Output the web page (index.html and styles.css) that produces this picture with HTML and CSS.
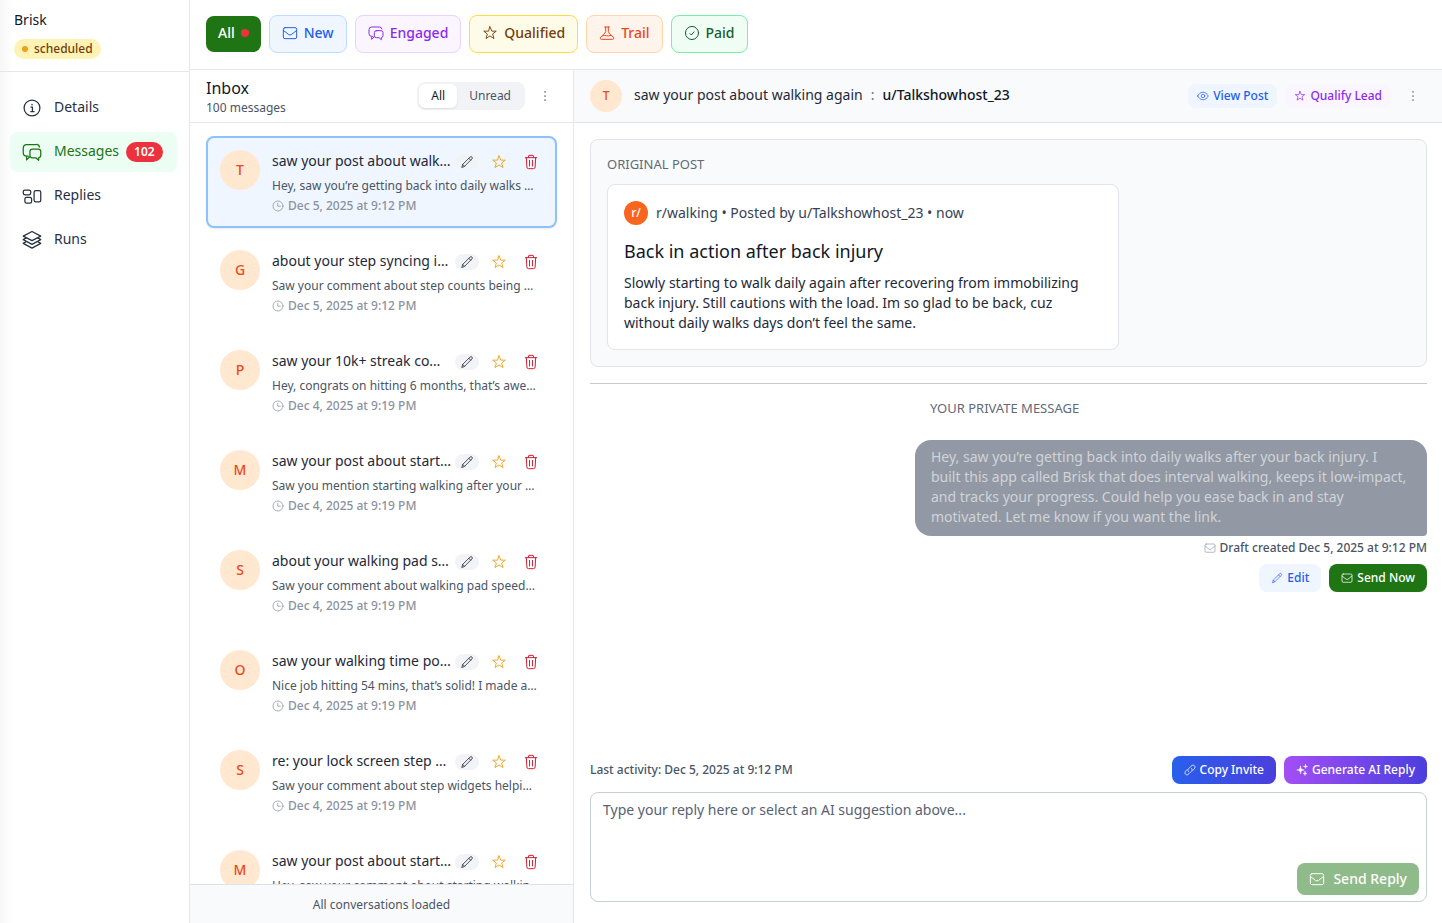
FILE: index.html
```html
<!DOCTYPE html>
<html lang="en">
<head>
<meta charset="utf-8">
<meta name="viewport" content="width=device-width, initial-scale=1">
<title>Brisk – Messages</title>
<link rel="stylesheet" href="styles.css">
</head>
<body>
<svg class="sprite" aria-hidden="true">
  <symbol id="i-info" viewBox="0 0 24 24"><circle cx="12" cy="12" r="9.500"/><path d="M10.800 10.800h1.700v5.400M10.500 16.300h4M12 7.500v.8"/></symbol>
  <symbol id="i-chat" viewBox="0 0 24 24"><path d="M5.500 18v3.500l3.500-3.500M7.500 17H5.500a4 4 0 0 1-4-4V7a4 4 0 0 1 4-4h11.500a4 4 0 0 1 4 3"/><path d="M12.500 8.500h7a3 3 0 0 1 3 3v4.500a3 3 0 0 1-2.500 3v3l-3.500-3h-4a3 3 0 0 1-3-3v-4.500a3 3 0 0 1 3-3z"/></symbol>
  <symbol id="i-replies" viewBox="0 0 24 24"><rect x="1.500" y="5" width="9" height="5.500" rx="2"/><rect x="3.500" y="13.500" width="8" height="7" rx="2"/><rect x="14.500" y="5.500" width="8" height="13.500" rx="2"/></symbol>
  <symbol id="i-layers" viewBox="0 0 24 24"><path d="M12 1.800 1.500 7.300 12 12.800l10.500-5.500zM5 9.500l-3.500 2L12 17.200l10.500-5.700-3.500-2M5 14l-3.500 2L12 21.800 22.500 16 19 14"/></symbol>
  <symbol id="i-mail" viewBox="0 0 24 24"><rect x="2" y="4" width="20" height="16.500" rx="2.500"/><path d="m2 8 8 6.300a3.200 3.200 0 0 0 4 0L22 8"/></symbol>
  <symbol id="i-star" viewBox="-1 -1 26 26"><path d="m12 2 2.900 7h7.300l-5.900 4.600 2.200 7.400L12 16.800 5.500 21l2.200-7.400L1.800 9h7.300z"/></symbol>
  <symbol id="i-flask" viewBox="0 0 24 24"><path d="M8.500 3h7M10 3v7L8 13.500l-5.500 4.700c-1.500 1.800-.5 3.300 1.500 3.300h16c2 0 3-1.500 1.500-3.300L16 13.500 14 10V3M5.500 16.200c4-2 6.500 2 12.500-.7"/></symbol>
  <symbol id="i-check" viewBox="0 0 24 24"><circle cx="12" cy="12" r="9.800"/><path d="m9 13 2 2 4-4.700"/></symbol>
  <symbol id="i-pencil" viewBox="-1 -1 26 26"><path d="M2.500 21.500 4 16.500 17.800 2.800a2.300 2.300 0 0 1 3.400 3.400L7.500 20zM15.500 5.200l3.300 3.300M4 16.500 7.500 20"/></symbol>
  <symbol id="i-trash" viewBox="0 0 24 24"><path d="M3.500 5.500h17M8 5.300l.8-3.300h6.400l.8 3.300M5 5.500l.8 14a2.500 2.500 0 0 0 2.500 2.500h7.400a2.500 2.500 0 0 0 2.500-2.500l.8-14M9.800 9.500v8.500M14.200 9.500v8.500"/></symbol>
  <symbol id="i-clock" viewBox="0 0 24 24"><circle cx="12" cy="12" r="10"/><path d="M11.500 6.500v6h5"/></symbol>
  <symbol id="i-eye" viewBox="0 0 24 24"><path d="M1.500 12C4 7 7.500 4.500 12 4.500S20 7 22.500 12C20 17 16.500 19.500 12 19.500S4 17 1.500 12z"/><circle cx="12" cy="12" r="3.500"/></symbol>
  <symbol id="i-link" viewBox="0 0 24 24"><path d="M9.500 15.500c-2.500-1.500-2.500-4 0-6.500l4.500-4.500c3-3 5.500-2.500 7-1s1.800 4-1 7l-2.500 2.500"/><path d="M14.500 8.500c2.500 1.500 2.500 4 0 6.500L10 19.500c-3 3-5.500 2.500-7 1s-1.800-4 1-7L6.500 11"/></symbol>
  <symbol id="i-sparkle" viewBox="0 0 24 24"><path fill="currentColor" stroke="currentColor" stroke-width="1" d="M9 4.500c.8 5.500 2 6.700 7.500 7.500-5.500.8-6.700 2-7.500 7.500-.8-5.500-2-6.700-7.500-7.500 5.500-.8 6.700-2 7.500-7.500zM19 1c.4 2.900 1.100 3.600 4 4-2.900.4-3.600 1.100-4 4-.4-2.900-1.100-3.600-4-4 2.900-.4 3.600-1.100 4-4zM18 15c.4 2.900 1.100 3.600 4 4-2.900.4-3.600 1.100-4 4-.4-2.900-1.100-3.600-4-4 2.900-.4 3.600-1.100 4-4z"/></symbol>
  <symbol id="i-more" viewBox="0 0 24 24"><path fill="currentColor" stroke="none" d="M10.500 3.500h3v3h-3zM10.500 10.500h3v3h-3zM10.500 17.500h3v3h-3z"/></symbol>
</svg>
<div class="app">
  <aside class="sidebar">
    <div class="brand">
      <div class="brand-name">Brisk</div>
      <span class="status"><i class="status-dot"></i>scheduled</span>
    </div>
    <nav class="nav">
      <a class="nav-link" href="#details"><svg class="icon-l"><use href="#i-info"/></svg><span>Details</span></a>
      <a class="nav-link nav-active" href="#messages"><svg class="icon-l"><use href="#i-chat"/></svg><span>Messages</span><b class="count">102</b></a>
      <a class="nav-link" href="#replies"><svg class="icon-l"><use href="#i-replies"/></svg><span>Replies</span></a>
      <a class="nav-link" href="#runs"><svg class="icon-l"><use href="#i-layers"/></svg><span>Runs</span></a>
    </nav>
  </aside>
  <div class="workspace">
    <div class="filters">
      <button class="filter filter-all">All<i class="dot"></i></button>
      <button class="filter filter-new"><svg class="icon-m"><use href="#i-mail"/></svg>New</button>
      <button class="filter filter-engaged"><svg class="icon-m"><use href="#i-chat"/></svg>Engaged</button>
      <button class="filter filter-qualified"><svg class="icon-m"><use href="#i-star"/></svg>Qualified</button>
      <button class="filter filter-trail"><svg class="icon-m"><use href="#i-flask"/></svg>Trail</button>
      <button class="filter filter-paid"><svg class="icon-m"><use href="#i-check"/></svg>Paid</button>
    </div>
    <div class="panes">
      <section class="inbox">
        <header class="inbox-head">
          <div class="inbox-title"><h1>Inbox</h1><p>100 messages</p></div>
          <div class="segmented"><button class="segment segment-on">All</button><button class="segment">Unread</button></div>
          <button class="more" aria-label="Inbox menu"><svg class="icon-s"><use href="#i-more"/></svg></button>
        </header>
        <div class="threads" id="threads"></div>
        <footer class="inbox-foot">All conversations loaded</footer>
      </section>
      <main class="detail">
        <header class="detail-head">
          <span class="avatar avatar-small">T</span>
          <div class="subject"><span>saw your post about walking again</span><span class="colon">:</span><strong>u/Talkshowhost_23</strong></div>
          <div class="detail-actions">
            <button class="chip chip-blue"><svg class="icon-xs"><use href="#i-eye"/></svg>View Post</button>
            <button class="chip chip-purple"><svg class="icon-xs"><use href="#i-star"/></svg>Qualify Lead</button>
          </div>
          <button class="more" aria-label="Conversation menu"><svg class="icon-s"><use href="#i-more"/></svg></button>
        </header>
        <div class="conversation">
          <section class="original">
            <h2 class="label">ORIGINAL POST</h2>
            <article class="post">
              <div class="post-meta"><span class="reddit">r/</span><span>r/walking • Posted by u/Talkshowhost_23 • now</span></div>
              <h3>Back in action after back injury</h3>
              <p>Slowly starting to walk daily again after recovering from immobilizing<br>back injury. Still cautions with the load. Im so glad to be back, cuz<br>without daily walks days don’t feel the same.</p>
            </article>
          </section>
          <section class="private">
            <div class="message">
              <h2 class="label label-private">YOUR PRIVATE MESSAGE</h2>
              <p class="bubble">Hey, saw you’re getting back into daily walks after your back injury. I<br>built this app called Brisk that does interval walking, keeps it low-impact,<br>and tracks your progress. Could help you ease back in and stay<br>motivated. Let me know if you want the link.</p>
              <div class="draft"><svg class="icon-xs"><use href="#i-mail"/></svg>Draft created Dec 5, 2025 at 9:12 PM</div>
              <div class="message-actions">
                <button class="action action-edit"><svg class="icon-xs"><use href="#i-pencil"/></svg>Edit</button>
                <button class="action action-send"><svg class="icon-xs"><use href="#i-mail"/></svg>Send Now</button>
              </div>
            </div>
          </section>
        </div>
        <footer class="composer">
          <div class="composer-bar">
            <span class="last">Last activity: Dec 5, 2025 at 9:12 PM</span>
            <button class="action action-copy"><svg class="icon-xs"><use href="#i-link"/></svg>Copy Invite</button>
            <button class="action action-ai"><svg class="icon-xs"><use href="#i-sparkle"/></svg>Generate AI Reply</button>
          </div>
          <div class="reply">
            <textarea aria-label="Reply" placeholder="Type your reply here or select an AI suggestion above..."></textarea>
            <button class="reply-send"><svg class="icon-m"><use href="#i-mail"/></svg>Send Reply</button>
          </div>
        </footer>
      </main>
    </div>
  </div>
</div>
<script src="app.js"></script>
</body>
</html>
```

FILE: app.js
```js
const threads = [
  ["T", "saw your post about walk…", "Hey, saw you’re getting back into daily walks …", "Dec 5, 2025 at 9:12 PM"],
  ["G", "about your step syncing i…", "Saw your comment about step counts being …", "Dec 5, 2025 at 9:12 PM"],
  ["P", "saw your 10k+ streak co…", "Hey, congrats on hitting 6 months, that’s awe…", "Dec 4, 2025 at 9:19 PM"],
  ["M", "saw your post about start…", "Saw you mention starting walking after your …", "Dec 4, 2025 at 9:19 PM"],
  ["S", "about your walking pad s…", "Saw your comment about walking pad speed…", "Dec 4, 2025 at 9:19 PM"],
  ["O", "saw your walking time po…", "Nice job hitting 54 mins, that’s solid! I made a…", "Dec 4, 2025 at 9:19 PM"],
  ["S", "re: your lock screen step …", "Saw your comment about step widgets helpi…", "Dec 4, 2025 at 9:19 PM"],
  ["M", "saw your post about start…", "Hey, saw your comment about starting walkin…", ""]
];

document.getElementById("threads").innerHTML = threads.map(([initial, title, preview, date], i) => `
  <article class="thread${i === 0 ? " thread-selected" : ""}">
    <span class="avatar">${initial}</span>
    <div class="thread-body">
      <div class="thread-top">
        <h2 class="thread-title">${title}</h2>
        <button class="tool tool-edit" aria-label="Edit draft"><svg class="icon-p"><use href="#i-pencil"/></svg></button>
        <button class="tool tool-star" aria-label="Star"><svg class="icon-m"><use href="#i-star"/></svg></button>
        <button class="tool tool-trash" aria-label="Delete"><svg class="icon-m"><use href="#i-trash"/></svg></button>
      </div>
      <p class="preview">${preview}</p>
      ${date && `<div class="date"><svg class="icon-xs"><use href="#i-clock"/></svg>${date}</div>`}
    </div>
  </article>`).join("");
```

FILE: styles.css
```css
* { box-sizing: border-box; }
body, h1, h2, h3, p { margin: 0; }
body {
  font: 14px/20px "Noto Sans", "Open Sans", sans-serif;
  color: #1e2939;
  background: #fff;
}
h1, h2, h3 { font-weight: 400; }
strong { font-weight: 500; }
button { font: inherit; color: inherit; border: 0; background: none; padding: 0; cursor: pointer; }
a { color: inherit; text-decoration: none; }
svg { fill: none; stroke: currentColor; stroke-width: 1.5; stroke-linecap: round; stroke-linejoin: round; flex: none; }
.sprite { display: none; }
.icon-l { width: 20px; height: 20px; }
.icon-m { width: 16px; height: 16px; }
.icon-s { width: 14px; height: 14px; }
.icon-p { width: 14px; height: 14px; }
.icon-xs { width: 12px; height: 12px; }

.app { display: flex; height: 100vh; }
.sidebar {
  width: 190px;
  flex: none;
  border-right: 1px solid #e5e7eb;
  background: linear-gradient(to right, #f7f7f7, #fff 14px);
}
.brand { display: flex; flex-direction: column; align-items: flex-start; gap: 9px; height: 72px; padding: 10px 14px 0; border-bottom: 1px solid #e5e7eb; }
.brand-name { color: #101828; }
.status {
  display: flex; align-items: center; gap: 6px;
  padding: 0 8px; border-radius: 10px;
  font-size: 12px; font-weight: 500; color: #733e0a; background: #fef3b5;
}
.status-dot { width: 6px; height: 6px; border-radius: 50%; background: #eba313; }
.nav { display: flex; flex-direction: column; gap: 4px; padding: 16px 12px 0 10px; }
.nav-link { display: flex; align-items: center; height: 40px; padding: 0 12px; border-radius: 8px; color: #27303f; }
.nav-link span { margin: 0 7px 2px 12px; }
.nav-active { color: #1c7412; background: #ecfdf3; }
.count { padding: 0 8px; border-radius: 10px; font-size: 12px; font-weight: 600; color: #fff; background: #ec323d; }

.workspace { display: flex; flex-direction: column; flex: 1; min-width: 0; }
.filters { display: flex; align-items: center; gap: 8px; height: 70px; flex: none; padding: 0 16px 2px; border-bottom: 1px solid #e5e7eb; }
.filter { display: flex; align-items: center; gap: 6px; height: 38px; padding: 0 12px 1px; border: 1px solid; border-radius: 8px; font-weight: 500; }
.filter-all { height: 36px; border: 0; color: #fff; background: #1f7514; }
.dot { width: 8px; height: 8px; border-radius: 50%; background: #ec323d; }
.filter-new { color: #245eea; background: #eff6ff; border-color: #bedbff; }
.filter-engaged { color: #8b2bea; background: #faf5ff; border-color: #e9d4ff; }
.filter-qualified { color: #733e0a; background: #fefce8; border-color: #f9dc4a; }
.filter-trail { color: #ec451a; background: #fff4eb; border-color: #ffd6a8; }
.filter-paid { color: #175c30; background: #effdf4; border-color: #7beda5; }

.panes { display: flex; flex: 1; min-height: 0; }
.inbox { display: flex; flex-direction: column; width: 384px; flex: none; border-right: 1px solid #e5e7eb; }
.inbox-head { display: flex; align-items: center; height: 53px; flex: none; padding: 0 20px 0 16px; border-bottom: 1px solid #e5e7eb; }
.inbox-title { flex: 1; padding-top: 3px; }
.inbox-title h1 { font-size: 16px; color: #101828; }
.inbox-title p { font-size: 12px; color: #4a5565; }
.segmented { display: flex; padding: 2px; border-radius: 8px; background: #f2f3f6; margin-right: 12px; }
.segment { height: 24px; padding: 0 12px; border-radius: 6px; font-size: 12px; color: #4a5565; }
.segment-on { color: #101828; background: #fff; box-shadow: 0 1px 2px #00000018; }
.more { display: grid; place-items: center; width: 16px; height: 24px; color: #989ba2; }
.threads { display: flex; flex-direction: column; gap: 8px; flex: 1; min-height: 0; overflow: hidden; padding: 13px 16px 0; }
.thread { display: flex; flex: none; gap: 12px; padding: 12px; border: 2px solid transparent; border-radius: 8px; }
.thread-selected { border-color: #8dc2fc; background: #eff6ff; box-shadow: 0 1px 2px #00000014; }
.avatar { display: grid; place-items: center; width: 40px; height: 40px; flex: none; border-radius: 50%; color: #ea4b1d; background: #ffe7d0; font-weight: 500; }
.avatar-small { width: 32px; height: 32px; font-size: 12px; }
.thread-body { display: flex; flex-direction: column; gap: 4px; flex: 1; min-width: 0; }
.thread-top { display: flex; align-items: center; gap: 8px; height: 24px; }
.thread-title { flex: 1; min-width: 0; font-size: 14px; white-space: nowrap; margin: 0 -8px 2px 0; }
.tool { display: grid; place-items: center; width: 24px; height: 24px; }
.tool-edit { height: 16px; border-radius: 8px; background: #f2f3f6; }
.tool-star { color: #eaa31b; }
.tool-trash { color: #cf1f32; }
.preview, .date { font-size: 12px; line-height: 16px; white-space: nowrap; color: #4a5565; }
.date { display: flex; align-items: center; gap: 4px; font-weight: 500; color: #8b92a0; }
.inbox-foot { height: 39px; flex: none; padding-top: 10px; border-top: 1px solid #dfe3e9; background: #f9fafb; text-align: center; font-size: 12px; color: #4a5565; }

.detail { display: flex; flex-direction: column; flex: 1; min-width: 0; }
.detail-head { display: flex; align-items: center; height: 53px; flex: none; padding: 0 21px 0 16px; border-bottom: 1px solid #dfe3e9; background: #f9fafb; }
.subject { display: flex; flex: 1; gap: 8px; padding: 0 0 2px 12px; white-space: nowrap; }
.subject strong { color: #101828; }
.colon { color: #6a7282; }
.detail-actions { display: flex; gap: 8px; margin-right: 14px; }
.chip { display: flex; align-items: center; gap: 4px; height: 24px; padding: 0 9px; border-radius: 8px; font-size: 12px; font-weight: 500; }
.chip-blue { color: #245eea; background: #eff6ff; }
.chip-purple { color: #8b2bea; background: #faf5ff; }
.conversation { flex: 1; min-height: 0; overflow: hidden; padding: 16px 15px 0 16px; }
.original { padding: 16px; border: 1px solid #e1e4e9; border-radius: 8px; background: #f9fafb; }
.label { font-size: 13px; line-height: 16px; color: #626a79; }
.post { max-width: 512px; margin-top: 12px; padding: 16px; border: 1px solid #e1e4e9; border-radius: 8px; background: #fff; }
.post-meta { display: flex; align-items: center; gap: 8px; color: #364153; }
.reddit { display: grid; place-items: center; width: 24px; height: 24px; border-radius: 50%; font-size: 12px; font-weight: 500; color: #fff; background: #f9641e; }
.post h3 { margin: 12px 0 8px; font-size: 18px; line-height: 28px; color: #101828; }
.post p, .bubble { white-space: nowrap; }
.private { display: flex; justify-content: flex-end; margin-top: 16px; padding-top: 16px; border-top: 1px solid #c9cacc; }
.message { width: 512px; }
.label-private { padding-left: 15px; margin-bottom: 24px; }
.bubble { padding: 7px 16px 9px; border-radius: 16px 16px 4px 16px; color: #d0d3d8; background: #9299a5; }
.draft { display: flex; align-items: center; justify-content: flex-end; gap: 4px; margin: 4px 0 8px; font-size: 12px; line-height: 16px; font-weight: 500; color: #4a5565; }
.draft svg { color: #99a1af; }
.message-actions { display: flex; justify-content: flex-end; gap: 8px; }
.action { display: flex; align-items: center; gap: 4px; height: 28px; padding: 0 12px; border-radius: 8px; font-size: 12px; font-weight: 500; color: #fff; }
.action-edit { color: #245eea; background: #eff6ff; }
.action-send { background: #1f7514; }
.action-copy { background: linear-gradient(to right, #2860eb, #4b3fdd); }
.action-ai { background: linear-gradient(to right, #a34ef5, #4b3fdd); }
.composer { padding: 0 15px 21px 16px; }
.composer-bar { display: flex; align-items: center; gap: 8px; margin-bottom: 8px; }
.last { flex: 1; font-size: 12px; font-weight: 500; color: #4a5565; }
.reply { position: relative; height: 110px; }
.reply textarea { display: block; width: 100%; height: 100%; padding: 7px 12px; border: 1px solid #c9ced7; border-radius: 8px; font: inherit; background: #fff; resize: none; }
.reply textarea::placeholder { color: #596273; opacity: 1; }
.reply-send { position: absolute; right: 8px; bottom: 7px; display: flex; align-items: center; gap: 8px; height: 32px; padding: 0 12px; border-radius: 8px; font-weight: 500; color: #fff; background: #8fba89; }
```
